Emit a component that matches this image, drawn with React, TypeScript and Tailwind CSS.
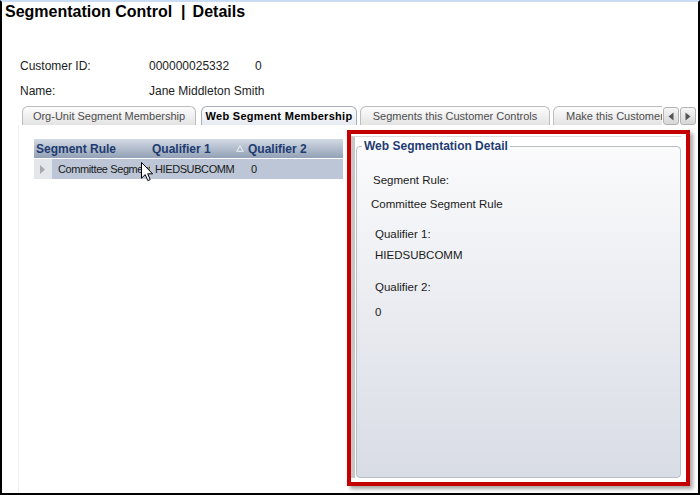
import React from 'react';

interface TabProps {
  label: string;
  className: string;
  active?: boolean;
}

function Tab({ label, className, active }: TabProps): JSX.Element {
  return (
    <div
      className={
        'h-[19px] shrink-0 flex items-center whitespace-nowrap overflow-hidden rounded-t-[6px] border border-b-0 text-[11px] leading-[14px] ' +
        (active
          ? 'border-[#a7aeb9] bg-linear-to-b from-white to-[#e6ebf2] text-black font-bold tracking-[0.3px] '
          : 'border-[#bdbdbd] bg-linear-to-b from-[#fdfdfd] to-[#e3e3e3] text-[#4d4d4d] ') +
        className
      }>
      {label}
    </div>
  );
}

function Cursor(): JSX.Element {
  return (
    <svg width="13" height="20" viewBox="0 0 13 20" className="absolute left-[107px] top-[3px]">
      <path
        d="M0.5 0.5 L0.5 16.2 L4.2 12.6 L6.8 18.6 L9.2 17.6 L6.7 11.8 L11.6 11.8 Z"
        fill="white"
        stroke="black"
        strokeWidth="1"
        strokeLinejoin="miter"
      />
    </svg>
  );
}

export default function App(): JSX.Element {
  return (
    <div className="w-[700px] h-[495px] flex flex-col bg-white border-x-2 border-b-2 border-t-2 border-black border-t-[#c8ddf5] font-['Liberation_Sans',Arial,sans-serif] text-[#1a1a1a] overflow-hidden">
      {/* 타이틀 */}
      <h1 className="pl-[3px] text-[16px] leading-[20px] font-bold text-black whitespace-nowrap">
        Segmentation Control<span className="ml-[9px] mr-[7px]">|</span>Details
      </h1>

      {/* 고객 정보 */}
      <div className="mt-[36px] pl-[18px] text-[12px] leading-[16px] text-[#222]">
        <div className="flex">
          <span className="w-[129px]">Customer ID:</span>
          <span className="w-[106px]">000000025332</span>
          <span>0</span>
        </div>
        <div className="flex mt-[9px]">
          <span className="w-[129px]">Name:</span>
          <span>Jane Middleton Smith</span>
        </div>
      </div>

      {/* 탭 */}
      <div className="mt-[7px] pl-[20px] flex items-end h-[19px]">
        <div className="w-[640px] flex items-end overflow-hidden">
          <Tab label="Org-Unit Segment Membership" className="w-[174px] justify-center" />
          <Tab label="Web Segment Membership" className="w-[156px] justify-center ml-[5px]" active />
          <Tab label="Segments this Customer Controls" className="w-[190px] justify-center ml-[3px]" />
          <Tab label="Make this Customer a Member" className="w-[160px] pl-[12px] ml-[3px]" />
        </div>
        <div className="flex gap-px ml-px">
          <div className="w-[16px] h-[18px] flex items-center justify-center rounded-[3px] border border-[#b3b3b3] bg-linear-to-b from-[#f6f6f6] to-[#d6d6d6]">
            <svg width="6" height="9" viewBox="0 0 6 9">
              <path d="M5.5 0.5 L0.5 4.5 L5.5 8.5 Z" fill="#555" />
            </svg>
          </div>
          <div className="w-[16px] h-[18px] flex items-center justify-center rounded-[3px] border border-[#b3b3b3] bg-linear-to-b from-[#f6f6f6] to-[#d6d6d6]">
            <svg width="6" height="9" viewBox="0 0 6 9">
              <path d="M0.5 0.5 L5.5 4.5 L0.5 8.5 Z" fill="#555" />
            </svg>
          </div>
        </div>
      </div>

      {/* 본문 */}
      <div className="flex-1 flex ml-[16px] border-l border-[#efefef]">
        {/* 목록 */}
        <div className="w-[328px] shrink-0 pt-[14px] pl-[15px]">
          <div className="w-[309px]">
            <div className="h-[19px] flex items-center bg-linear-to-b from-[#d3dae4] to-[#93a1b6] text-[12px] font-bold text-[#1d3b70] whitespace-nowrap">
              <span className="w-[116px] pl-[2px]">Segment Rule</span>
              <span className="w-[82px] pl-[2px]">Qualifier 1</span>
              <span className="flex items-center pl-[4px]">
                <svg width="8" height="7" viewBox="0 0 8 7" className="mr-[4px]">
                  <path d="M4 0.8 L7.3 6.3 L0.7 6.3 Z" fill="none" stroke="#eef1f5" strokeWidth="1" />
                </svg>
                Qualifier 2
              </span>
            </div>
            <div className="relative mt-px h-[20px] flex items-center bg-[#bcc6d6] text-[11px] tracking-[-0.4px] text-[#1a1a1a] whitespace-nowrap">
              <div className="w-[18px] h-full flex items-center pl-[6px] bg-[#e3e6eb]">
                <svg width="5" height="9" viewBox="0 0 5 9">
                  <path d="M0 0 L5 4.5 L0 9 Z" fill="#a9a9a9" />
                </svg>
              </div>
              <div className="w-[98px] pl-[6px] overflow-hidden">Committee Segment Rule</div>
              <div className="w-[96px] pl-[5px]">HIEDSUBCOMM</div>
              <div className="pl-[5px]">0</div>
              <Cursor />
            </div>
          </div>
        </div>

        {/* 상세 */}
        <div className="mt-[5px] w-[343px] h-[356px] shrink-0 flex flex-col border-4 border-[#c40000] shadow-[3px_3px_4px_rgba(0,0,0,0.35)] pt-[2px] pr-[5px] pb-[4px]">
          <div className="flex-1 flex flex-col border-l-4 border-t border-l-[#c6c6c6] border-t-[#dcdcdc] pt-[2px] pl-px">
            <fieldset className="flex-1 min-h-0 border border-[#b8bdc6] rounded-[4px] bg-linear-to-b from-[#fbfbfc] to-[#d8dce5] text-[11.5px] leading-[16px] text-[#1a1a1a]">
              <legend className="ml-[5px] px-[2px] text-[12px] leading-[14px] font-bold text-[#1f3c73]">
                Web Segmentation Detail
              </legend>
              <div className="pl-[16px] mt-[19px]">Segment Rule:</div>
              <div className="pl-[14px] mt-[8px]">Committee Segment Rule</div>
              <div className="pl-[18px] mt-[14px]">Qualifier 1:</div>
              <div className="pl-[18px] mt-[5px]">HIEDSUBCOMM</div>
              <div className="pl-[18px] mt-[16px]">Qualifier 2:</div>
              <div className="pl-[18px] mt-[9px]">0</div>
            </fieldset>
          </div>
        </div>
      </div>
    </div>
  );
}
